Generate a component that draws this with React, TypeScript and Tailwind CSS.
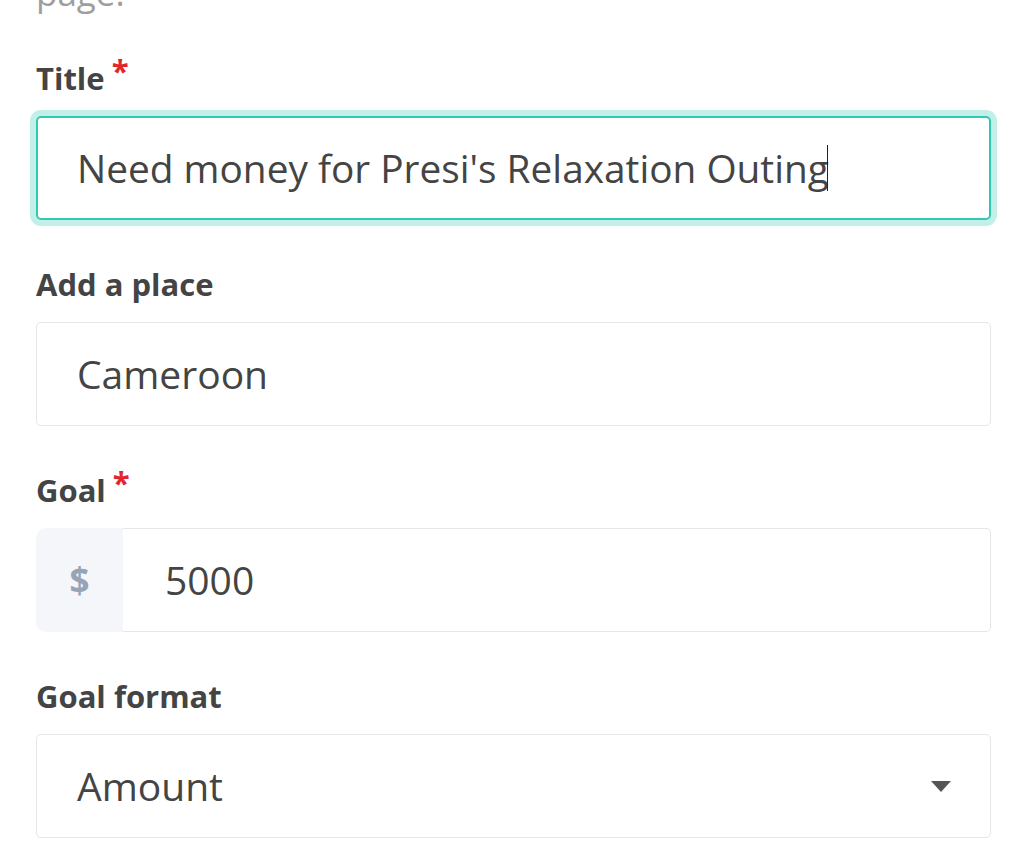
import type { ReactNode } from "react";

const font = { fontFamily: '"Open Sans", "Noto Sans", sans-serif' };

function Label({ children, required }: { children: ReactNode; required?: boolean }) {
  return (
    <div className="h-[44px] text-[31px] font-bold leading-[44px] text-[#444444]">
      {children}
      {required && <span className="relative -top-[8px] ml-[7px] text-[31px] text-[#e3262b]">*</span>}
    </div>
  );
}

export default function App() {
  return (
    <div className="h-[853px] w-[1024px] overflow-hidden bg-white pl-[36px] pr-[33px]" style={font}>
      <p className="-mt-[31px] mb-[39px] text-[35px] leading-[48px] text-[#9e9e9e]">page.</p>

      <div className="flex flex-col gap-[42px]">
        <div className="flex flex-col gap-[16px]">
          <Label required>Title</Label>
          <div className="flex h-[104px] items-center rounded-[5px] border-2 border-[#2fc9b2] pl-[39px] text-[38.8px] text-[#444444] shadow-[0_0_0_6px_#c2efe7]">
            <span>Need money for Presi's Relaxation Outing</span>
            <span className="-ml-[2px] inline-block h-[46px] w-px bg-[#222222]" />
          </div>
        </div>

        <div className="flex flex-col gap-[16px]">
          <Label>Add a place</Label>
          <div className="flex h-[104px] items-center rounded-[5px] border border-[#e6e6e6] pl-[40px] text-[39px] text-[#444444]">
            Cameroon
          </div>
        </div>

        <div className="flex flex-col gap-[16px]">
          <Label required>Goal</Label>
          <div className="flex h-[104px]">
            <div className="flex w-[87px] items-center justify-center rounded-l-[10px] bg-[#f4f6f9] text-[35px] font-bold text-[#97a3b6]">
              $
            </div>
            <div className="flex flex-1 items-center rounded-r-[5px] border border-l-0 border-[#e6e6e6] pl-[42px] text-[39px] text-[#444444]">
              5000
            </div>
          </div>
        </div>

        <div className="flex flex-col gap-[16px]">
          <Label>Goal format</Label>
          <div className="flex h-[104px] items-center justify-between rounded-[5px] border border-[#e6e6e6] pl-[40px] pr-[39px] text-[39px] text-[#444444]">
            <span>Amount</span>
            <svg width="20" height="11" viewBox="0 0 20 11" aria-hidden="true">
              <path d="M0 0H20L10 11Z" fill="#555555" />
            </svg>
          </div>
        </div>
      </div>
    </div>
  );
}
